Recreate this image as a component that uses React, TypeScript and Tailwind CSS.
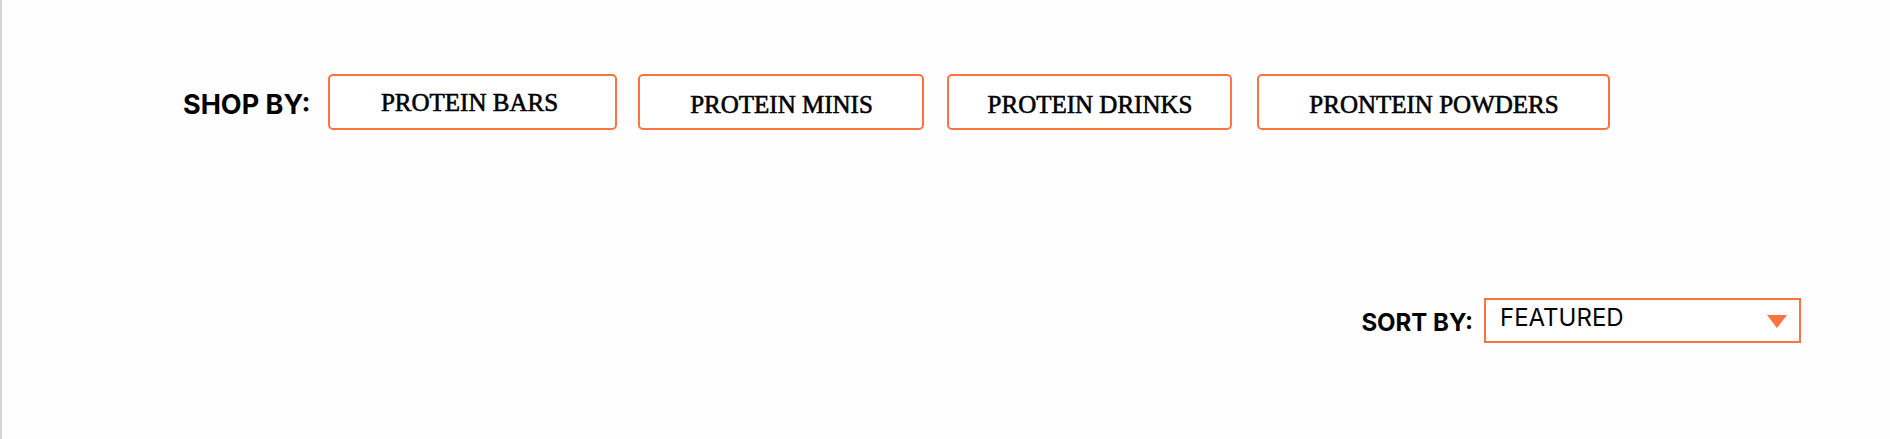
import React from "react";

const serif = { fontFamily: '"Liberation Serif", "Times New Roman", serif' };

export default function App() {
  const buttons = [
    { label: "PROTEIN BARS", cls: "w-[289px] pt-0 pr-[7px]" },
    { label: "PROTEIN MINIS", cls: "w-[286px] ml-[21px] pt-[5px]" },
    { label: "PROTEIN DRINKS", cls: "w-[285px] ml-[23px] pt-[5px]" },
    { label: "PRONTEIN POWDERS", cls: "w-[353px] ml-[25px] pt-[5px]" },
  ];
  return (
    <div className="w-[1890px] h-[439px] bg-[#fefefe] border-l-2 border-[#d4d4d4] flex flex-col font-['Inter',sans-serif]">
      <div className="flex items-center pt-[74px] pl-[181px]">
        <span className="text-[27px] font-bold text-black leading-none mt-[4px]">SHOP BY:</span>
        <div className="flex ml-[18px]">
          {buttons.map((b) => (
            <button
              key={b.label}
              className={`${b.cls} h-[56px] border-2 border-[#ff7340] rounded-[5px] bg-white flex items-center justify-center`}
            >
              <span style={serif} className="text-[25px] text-black leading-none [-webkit-text-stroke:0.6px_black]">
                {b.label}
              </span>
            </button>
          ))}
        </div>
      </div>
      <div className="flex items-center justify-end mt-[168px] pr-[89px]">
        <span className="text-[24px] font-bold text-black leading-none mt-[4px]">SORT BY:</span>
        <div className="ml-[11px] w-[317px] h-[45px] border-2 border-[#ff7340] bg-white flex items-center justify-between pl-[14px] pr-[12px]">
          <span className="text-[24px] text-black leading-none mb-[5px]">FEATURED</span>
          <svg width="20" height="14" viewBox="0 0 20 14" className="mt-[2px]">
            <polygon points="0,0 20,0 10,13" fill="#ff7340" />
          </svg>
        </div>
      </div>
    </div>
  );
}
